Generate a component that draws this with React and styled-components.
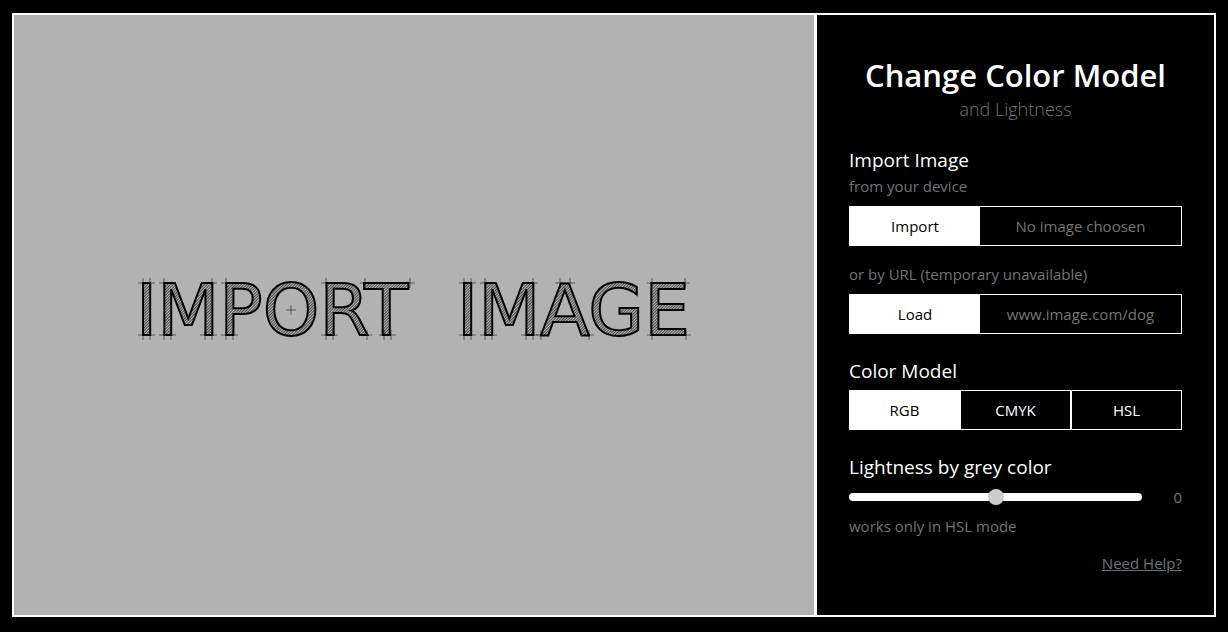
import React, { useState } from "react";
import styled, { createGlobalStyle } from "styled-components";

const GlobalStyle = createGlobalStyle`
  *, *::before, *::after { box-sizing: border-box; }
  body {
    margin: 0;
    background: #000;
    color: #fff;
    font-family: "Segoe UI", "Open Sans", "Noto Sans", sans-serif;
    font-size: 15px;
    line-height: 24px;
  }
  button, input { font: inherit; }
`;

const Page = styled.div`
  min-height: 100vh;
  padding: 13px 12px 15px;
  display: flex;
`;

const Frame = styled.main`
  flex: 1;
  min-width: 0;
  display: grid;
  grid-template-columns: 2fr 1fr;
  border: 2px solid #fff;
`;

const Preview = styled.section`
  min-width: 0;
  background: #b2b2b2;
  display: flex;
  align-items: center;
  justify-content: center;
`;

const Lettering = styled.svg`
  width: 72%;
  height: auto;
  overflow: visible;
`;

const Word = styled.text`
  font-family: "DejaVu Sans", sans-serif;
  font-size: 72px;
  fill: url(#hatch);
  stroke: #000;
  stroke-width: 2px;
`;

const Ticks = styled.path`
  fill: none;
  stroke: #000;
  stroke-opacity: 0.5;
  stroke-width: 1px;
`;

const Panel = styled.aside`
  min-width: 0;
  border-left: 3px solid #fff;
  padding: 39px 32px;
`;

const Header = styled.header`
  text-align: center;
  margin-bottom: 25px;
`;

const Title = styled.h1`
  margin: 0;
  font-size: 31px;
  line-height: 42px;
  font-weight: 600;
  white-space: nowrap;
`;

const Subtitle = styled.p`
  margin: 0;
  font-size: 18px;
  line-height: 26px;
  font-weight: 300;
  color: #6c757d;
`;

const Group = styled.section`
  margin-bottom: ${(p) => (p.$tight ? "13px" : "24px")};
`;

const Heading = styled.h2`
  margin: 0 0 1px;
  font-size: 19px;
  line-height: 26px;
  font-weight: 500;
`;

const Hint = styled.p`
  margin: 0;
  color: #6c757d;
`;

const HintLabel = styled.label`
  display: block;
  margin-top: 16px;
  color: #6c757d;
`;

const Field = styled.div`
  display: flex;
  height: 40px;
  margin-top: 8px;
  border: 1px solid #fff;
`;

const FieldButton = styled.button`
  flex: 0 0 130px;
  border: 0;
  padding: 0;
  background: #fff;
  color: #000;
  cursor: pointer;
`;

const FileName = styled.output`
  flex: 1;
  display: flex;
  align-items: center;
  justify-content: center;
  color: #757575;
`;

const UrlInput = styled.input`
  flex: 1;
  min-width: 0;
  border: 0;
  padding: 0;
  background: #000;
  color: #fff;
  text-align: center;
  &::placeholder { color: #757575; opacity: 1; }
`;

const Segments = styled.div`
  display: grid;
  grid-template-columns: repeat(3, 1fr);
  height: 40px;
  margin-top: 6px;
`;

const Segment = styled.label`
  display: flex;
  align-items: center;
  justify-content: center;
  border: 1px solid #fff;
  background: ${(p) => (p.$active ? "#fff" : "#000")};
  color: ${(p) => (p.$active ? "#000" : "#fff")};
  cursor: pointer;
`;

const HiddenRadio = styled.input`
  appearance: none;
  width: 0;
  height: 0;
  margin: 0;
`;

const SliderRow = styled.div`
  display: flex;
  align-items: center;
  justify-content: space-between;
  gap: 24px;
  margin-bottom: 5px;
  padding-top: 4px;
`;

const Slider = styled.input`
  appearance: none;
  flex: 0 0 88%;
  height: 8px;
  margin: 0;
  border-radius: 4px;
  background: #fff;
  &::-webkit-slider-thumb {
    appearance: none;
    width: 16px;
    height: 16px;
    border-radius: 50%;
    background: #ccc;
  }
`;

const Value = styled.output`
  color: #6c757d;
`;

const Footer = styled.footer`
  text-align: right;
`;

const HelpLink = styled.a`
  color: #6c757d;
`;

const MODELS = ["RGB", "CMYK", "HSL"];

// Drafting marks at the corners of the letters: edges that meet the
// cap line (y = 0) and the base line (y = 52).
const CAP_MARKS = [17, 24, 38, 86, 100, 200, 239, 284, 338, 345, 359, 407, 434, 444, 526, 559];
const BASE_MARKS = [17, 24, 38, 45, 79, 86, 100, 107, 200, 207, 241, 258, 265, 338, 345, 359, 366, 400, 407, 415, 463, 526, 560];

const tick = (x, y) => `M${x - 5} ${y}h10M${x} ${y - 5}v10`;
const TICKS = [
  ...CAP_MARKS.map((x) => tick(x, 0)),
  ...BASE_MARKS.map((x) => tick(x, 52)),
  tick(165, 27),
].join("");

export default function App() {
  const [model, setModel] = useState("RGB");
  const [lightness, setLightness] = useState(0);

  return (
    <Page>
      <GlobalStyle />
      <Frame>
        <Preview>
          <Lettering viewBox="0 0 576 64">
            <defs>
              <pattern id="hatch" width="2" height="2" patternUnits="userSpaceOnUse" patternTransform="rotate(45)">
                <rect width="2" height="2" fill="#b2b2b2" />
                <rect width="1" height="2" fill="#4d4d4d" />
              </pattern>
            </defs>
            <Word x="10" y="52">IMPORT</Word>
            <Word x="331" y="52">IMAGE</Word>
            <Ticks d={TICKS} />
          </Lettering>
        </Preview>
        <Panel>
          <Header>
            <Title>Change Color Model</Title>
            <Subtitle>and Lightness</Subtitle>
          </Header>
          <Group>
            <Heading>Import Image</Heading>
            <Hint>from your device</Hint>
            <Field>
              <FieldButton type="button">Import</FieldButton>
              <FileName>No image choosen</FileName>
            </Field>
            <HintLabel htmlFor="url">or by URL (temporary unavailable)</HintLabel>
            <Field>
              <FieldButton type="button">Load</FieldButton>
              <UrlInput id="url" type="text" placeholder="www.image.com/dog" />
            </Field>
          </Group>
          <Group>
            <Heading id="model-heading">Color Model</Heading>
            <Segments role="radiogroup" aria-labelledby="model-heading">
              {MODELS.map((name) => (
                <Segment key={name} $active={name === model}>
                  <HiddenRadio
                    type="radio"
                    name="model"
                    checked={name === model}
                    onChange={() => setModel(name)}
                  />
                  {name}
                </Segment>
              ))}
            </Segments>
          </Group>
          <Group $tight>
            <Heading><label htmlFor="lightness">Lightness by grey color</label></Heading>
            <SliderRow>
              <Slider
                id="lightness"
                type="range"
                min="-100"
                max="100"
                value={lightness}
                onChange={(e) => setLightness(Number(e.target.value))}
              />
              <Value htmlFor="lightness">{lightness}</Value>
            </SliderRow>
            <Hint>works only in HSL mode</Hint>
          </Group>
          <Footer>
            <HelpLink href="#help">Need Help?</HelpLink>
          </Footer>
        </Panel>
      </Frame>
    </Page>
  );
}
